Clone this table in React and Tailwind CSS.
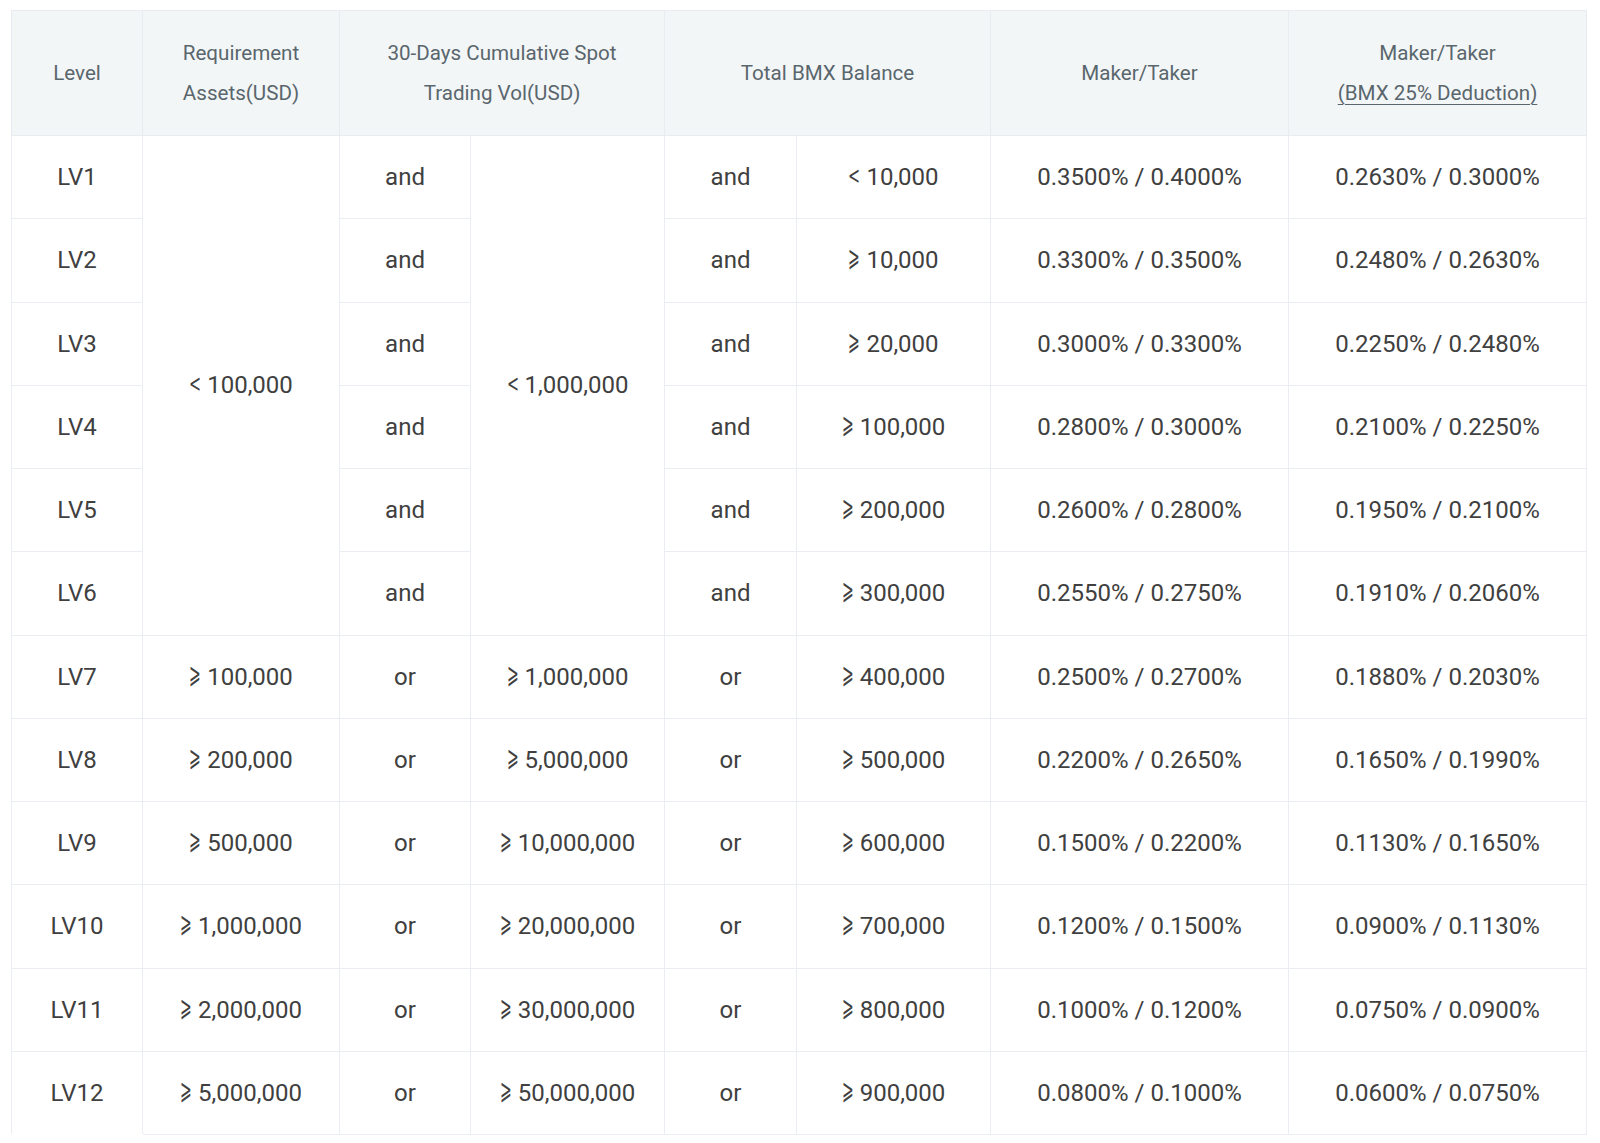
import React from "react";

const rows = [
  ["LV1", null, "and", null, "and", "< 10,000", "0.3500% / 0.4000%", "0.2630% / 0.3000%"],
  ["LV2", null, "and", null, "and", "≥ 10,000", "0.3300% / 0.3500%", "0.2480% / 0.2630%"],
  ["LV3", null, "and", null, "and", "≥ 20,000", "0.3000% / 0.3300%", "0.2250% / 0.2480%"],
  ["LV4", null, "and", null, "and", "≥ 100,000", "0.2800% / 0.3000%", "0.2100% / 0.2250%"],
  ["LV5", null, "and", null, "and", "≥ 200,000", "0.2600% / 0.2800%", "0.1950% / 0.2100%"],
  ["LV6", null, "and", null, "and", "≥ 300,000", "0.2550% / 0.2750%", "0.1910% / 0.2060%"],
  ["LV7", "≥ 100,000", "or", "≥ 1,000,000", "or", "≥ 400,000", "0.2500% / 0.2700%", "0.1880% / 0.2030%"],
  ["LV8", "≥ 200,000", "or", "≥ 5,000,000", "or", "≥ 500,000", "0.2200% / 0.2650%", "0.1650% / 0.1990%"],
  ["LV9", "≥ 500,000", "or", "≥ 10,000,000", "or", "≥ 600,000", "0.1500% / 0.2200%", "0.1130% / 0.1650%"],
  ["LV10", "≥ 1,000,000", "or", "≥ 20,000,000", "or", "≥ 700,000", "0.1200% / 0.1500%", "0.0900% / 0.1130%"],
  ["LV11", "≥ 2,000,000", "or", "≥ 30,000,000", "or", "≥ 800,000", "0.1000% / 0.1200%", "0.0750% / 0.0900%"],
  ["LV12", "≥ 5,000,000", "or", "≥ 50,000,000", "or", "≥ 900,000", "0.0800% / 0.1000%", "0.0600% / 0.0750%"],
];

function Val({ text }) {
  if (text.startsWith("≥ ")) {
    return (
      <span>
        <span
          className="inline-block w-[10px] mr-[8px] text-[28px] leading-none scale-x-[0.5] -translate-y-[2px] origin-left"
          style={{ fontFamily: "'DejaVu Sans', sans-serif" }}
        >
          ⩾
        </span>
        {text.slice(2)}
      </span>
    );
  }
  if (text.startsWith("< ")) {
    return (
      <span>
        <span
          className="inline-block w-[10px] mr-[8px] text-[24px] leading-none scale-x-[0.6] -translate-y-[1px] origin-left"
          style={{ fontFamily: "'DejaVu Sans', sans-serif" }}
        >
          {"<"}
        </span>
        {text.slice(2)}
      </span>
    );
  }
  return <span>{text}</span>;
}

const th = "border border-[#e8ecf0] font-normal text-center align-middle px-2";
const td = "border border-[#eaedf2] text-center align-middle p-0";

export default function App() {
  return (
    <div
      className="min-h-[1143px] bg-white pt-[10px] pl-[11px]"
      style={{ fontFamily: "Roboto, 'Liberation Sans', sans-serif" }}
    >
      <table className="table-fixed border-collapse w-[1575px]">
        <colgroup>
          <col className="w-[131px]" />
          <col className="w-[197px]" />
          <col className="w-[131px]" />
          <col className="w-[194px]" />
          <col className="w-[132px]" />
          <col className="w-[194px]" />
          <col className="w-[298px]" />
          <col className="w-[298px]" />
        </colgroup>
        <thead>
          <tr className="h-[125px] bg-[#f3f6f7] text-[20.6px] leading-[40px] text-[#5a666d]">
            <th className={th}>Level</th>
            <th className={th}>
              Requirement
              <br />
              Assets(USD)
            </th>
            <th className={th} colSpan={2}>
              30-Days Cumulative Spot
              <br />
              Trading Vol(USD)
            </th>
            <th className={th} colSpan={2}>Total BMX Balance</th>
            <th className={th}>Maker/Taker</th>
            <th className={th}>
              Maker/Taker
              <br />
              <span className="underline underline-offset-[4px] decoration-1">(BMX 25% Deduction)</span>
            </th>
          </tr>
        </thead>
        <tbody className="text-[24px] text-[#404040]">
          {rows.map((r, i) => (
            <tr key={r[0]} className="h-[83.25px]">
              <td className={`${td} ${i === rows.length - 1 ? "border-b-white" : ""}`}>{r[0]}</td>
              {i === 0 && (
                <td className={td} rowSpan={6}>
                  <Val text="< 100,000" />
                </td>
              )}
              {r[1] && (
                <td className={td}>
                  <Val text={r[1]} />
                </td>
              )}
              <td className={td}>{r[2]}</td>
              {i === 0 && (
                <td className={td} rowSpan={6}>
                  <Val text="< 1,000,000" />
                </td>
              )}
              {r[3] && (
                <td className={td}>
                  <Val text={r[3]} />
                </td>
              )}
              <td className={td}>{r[4]}</td>
              <td className={td}>
                <Val text={r[5]} />
              </td>
              <td className={td}>{r[6]}</td>
              <td className={td}>{r[7]}</td>
            </tr>
          ))}
        </tbody>
      </table>
    </div>
  );
}
